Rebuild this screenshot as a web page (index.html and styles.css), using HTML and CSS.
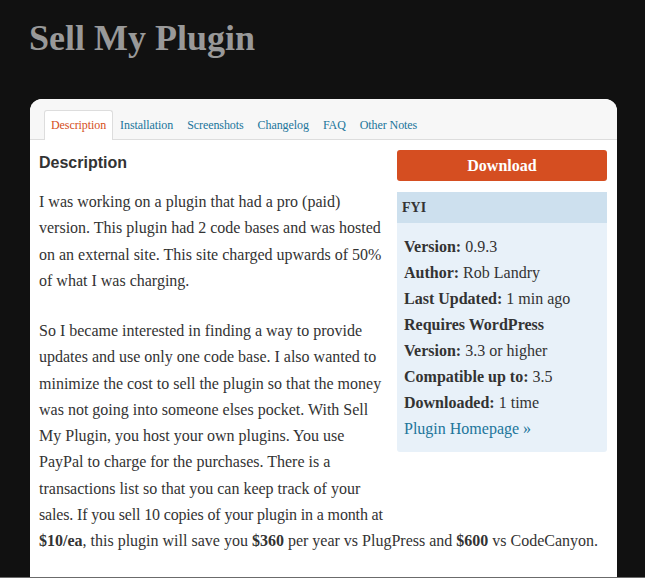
FILE: index.html
```html
<!DOCTYPE html>
<html>
<head>
<meta charset="utf-8">
<title>Sell My Plugin</title>
<link rel="stylesheet" href="styles.css">
</head>
<body>
<header class="site-header">
  <h1 class="site-title">Sell My Plugin</h1>
</header>
<div class="card">
  <ul class="tabs">
    <li class="tab active">Description</li>
    <li class="tab">Installation</li>
    <li class="tab">Screenshots</li>
    <li class="tab">Changelog</li>
    <li class="tab">FAQ</li>
    <li class="tab">Other Notes</li>
  </ul>
  <div class="content">
    <aside class="sidebar">
      <a class="download">Download</a>
      <div class="fyi">
        <div class="fyi-head">FYI</div>
        <div class="fyi-body">
          <div><b>Version:</b> 0.9.3</div>
          <div><b>Author:</b> Rob Landry</div>
          <div><b>Last Updated:</b> 1 min ago</div>
          <div><b>Requires WordPress Version:</b> 3.3 or higher</div>
          <div><b>Compatible up to:</b> 3.5</div>
          <div><b>Downloaded:</b> 1 time</div>
          <div><a class="link">Plugin Homepage »</a></div>
        </div>
      </div>
    </aside>
    <h2 class="heading">Description</h2>
    <p class="text">I was working on a plugin that had a pro (paid) version. This plugin had 2 code bases and was hosted on an external site. This site charged upwards of 50% of what I was charging.</p>
    <p class="text">So I became interested in finding a way to provide updates and use only one code base. I also wanted to minimize the cost to sell the plugin so that the money was not going into someone elses pocket. With Sell My Plugin, you host your own plugins. You use PayPal to charge for the purchases. There is a transactions list so that you can keep track of your <span class="tight">sales. If you sell 10 copies of your plugin in a month at</span> <b>$10/ea</b>, this plugin will save you <b>$360</b> per year vs PlugPress and <b>$600</b> vs CodeCanyon.</p>
  </div>
</div>
</body>
</html>
```

FILE: styles.css
```css
html, body {
  margin: 0;
  padding: 0;
}
body {
  background: #111111;
  font-family: "Liberation Serif", "Times New Roman", serif;
  color: #333333;
}
body::after {
  content: "";
  position: fixed;
  left: 0;
  right: 0;
  bottom: 0;
  height: 1px;
  background: #6b6b6b;
}
.site-header {
  padding: 18px 0 0 29px;
}
.site-title {
  margin: 0;
  font-size: 36px;
  line-height: 40px;
  font-weight: bold;
  color: #999999;
}
.card {
  margin: 41px 28px 0 30px;
  background: #ffffff;
  border-radius: 12px 12px 0 0;
  height: 479px;
  overflow: hidden;
}
.tabs {
  list-style: none;
  margin: 0;
  padding: 11px 14px 0;
  display: flex;
  background: #f7f7f7;
  border-bottom: 1px solid #dddddd;
}
.tab {
  font-size: 12px;
  line-height: 28px;
  padding: 0 6px;
  letter-spacing: -0.08px;
  color: #21759b;
  border: 1px solid transparent;
  border-bottom: none;
  margin-bottom: -1px;
}
.tab.active {
  background: #ffffff;
  border-color: #dddddd;
  border-radius: 3px 3px 0 0;
  color: #d54e21;
  padding-bottom: 1px;
}
.content {
  padding: 10px 10px 30px 9px;
}
.sidebar {
  float: right;
  width: 210px;
  margin: 0 0 60px 7px;
}
.download {
  display: block;
  height: 31px;
  line-height: 31px;
  background: #d54e21;
  color: #ffffff;
  text-align: center;
  font-weight: bold;
  font-size: 16px;
  border-radius: 3px;
}
.fyi {
  margin-top: 11px;
  background: #e8f1f9;
  border-radius: 0 0 3px 3px;
}
.fyi-head {
  background: #cde0ee;
  height: 31px;
  line-height: 31px;
  padding-left: 5px;
  font-weight: bold;
  font-size: 14px;
  color: #333333;
}
.fyi-body {
  padding: 11px 7px 10px;
  font-size: 16px;
  line-height: 26px;
}
.link {
  color: #21759b;
}
.heading {
  margin: 3px 0 16px;
  font-family: "Liberation Sans", Arial, sans-serif;
  font-size: 16px;
  line-height: 20px;
  font-weight: bold;
  color: #333333;
}
.text {
  margin: 0 0 24px;
  font-size: 16px;
  line-height: 26.25px;
}
.tight {
  letter-spacing: -0.15px;
}
```
